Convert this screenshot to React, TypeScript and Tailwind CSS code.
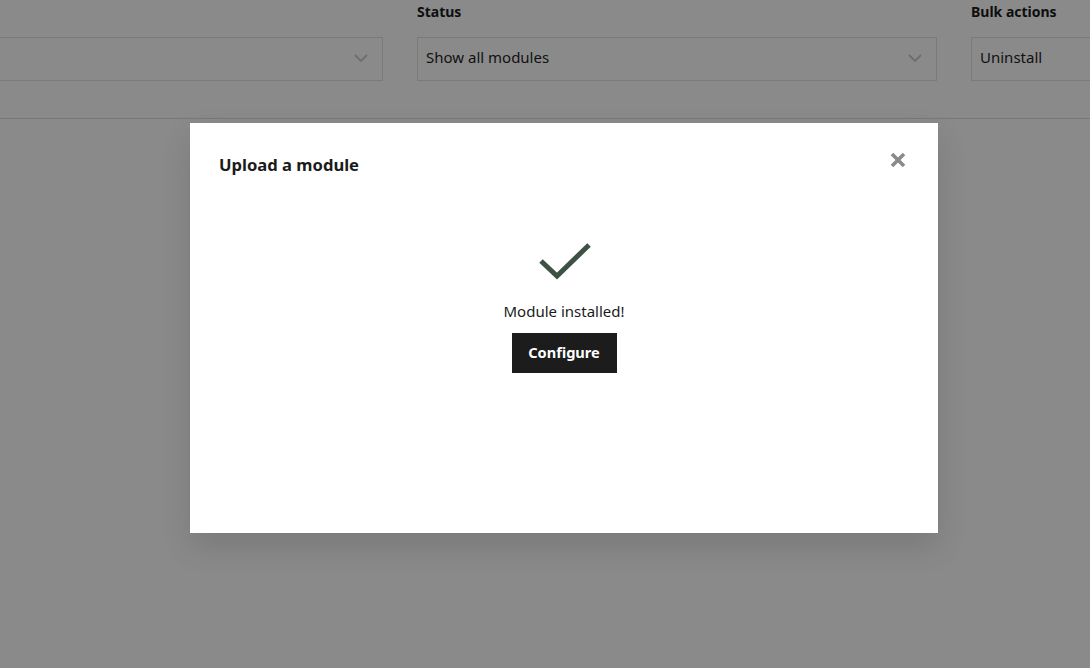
import React from "react";

function Chevron() {
  return (
    <svg width="16" height="10" viewBox="0 0 16 10" fill="none">
      <path d="M2 2l6 6 6-6" stroke="#c9c9c9" strokeWidth="1.8" />
    </svg>
  );
}

function FilterCol({ label, value, width, chevron = true }: { label: string; value: string; width: string; chevron?: boolean }) {
  return (
    <div className={`flex flex-col shrink-0 ${width}`}>
      <div className="h-[22px] text-[14px] font-bold leading-[22px] text-[#1b1b1b]">{label}</div>
      <div className="mt-[14px] flex h-[44px] items-center justify-between border border-[#e2e2e2] bg-white pb-[3px] pl-[8px] pr-[13px] text-[15px] text-[#1f1f1f]">
        <span>{value}</span>
        {chevron && <Chevron />}
      </div>
    </div>
  );
}

export default function App() {
  return (
    <div
      className="relative h-[668px] w-[1090px] overflow-hidden bg-white"
      style={{ fontFamily: '"Noto Sans", "Open Sans", sans-serif' }}
    >
      <div className="border-b border-[#dedede] pb-[37px] pt-[1px]">
        <div className="ml-[-137px] flex gap-[34px]">
          <FilterCol label="" value="" width="w-[520px]" />
          <FilterCol label="Status" value="Show all modules" width="w-[520px]" />
          <FilterCol label="Bulk actions" value="Uninstall" width="w-[300px]" chevron={false} />
        </div>
      </div>

      <div className="absolute inset-0 bg-black/[0.46]">
        <div className="ml-[190px] mt-[123px] flex h-[410px] w-[748px] flex-col bg-white shadow-[0_14px_30px_rgba(0,0,0,0.12)]">
          <div className="flex items-start justify-between pl-[29px] pr-[31px] pt-[30px]">
            <h2 className="text-[16.6px] font-bold leading-[24px] text-[#1b1b1b]">Upload a module</h2>
            <svg width="18" height="18" viewBox="0 0 18 18" className="mt-[-2px]">
              <path d="M3 3l12 12M15 3L3 15" stroke="#8a8a8a" strokeWidth="3.6" strokeLinecap="butt" />
            </svg>
          </div>
          <div className="mt-[64px] flex flex-col items-center">
            <svg width="54" height="40" viewBox="0 0 54 40" className="ml-[2px]">
              <path d="M3 20l16 15L51 4" stroke="#3d5245" strokeWidth="5" fill="none" />
            </svg>
            <div className="mt-[19px] text-[15px] leading-[22px] text-[#1b1b1b]">Module installed!</div>
            <button className="mt-[11px] flex h-[40px] w-[105px] items-center justify-center bg-[#1c1c1c] text-[14.6px] font-bold text-white">
              Configure
            </button>
          </div>
        </div>
      </div>
    </div>
  );
}
